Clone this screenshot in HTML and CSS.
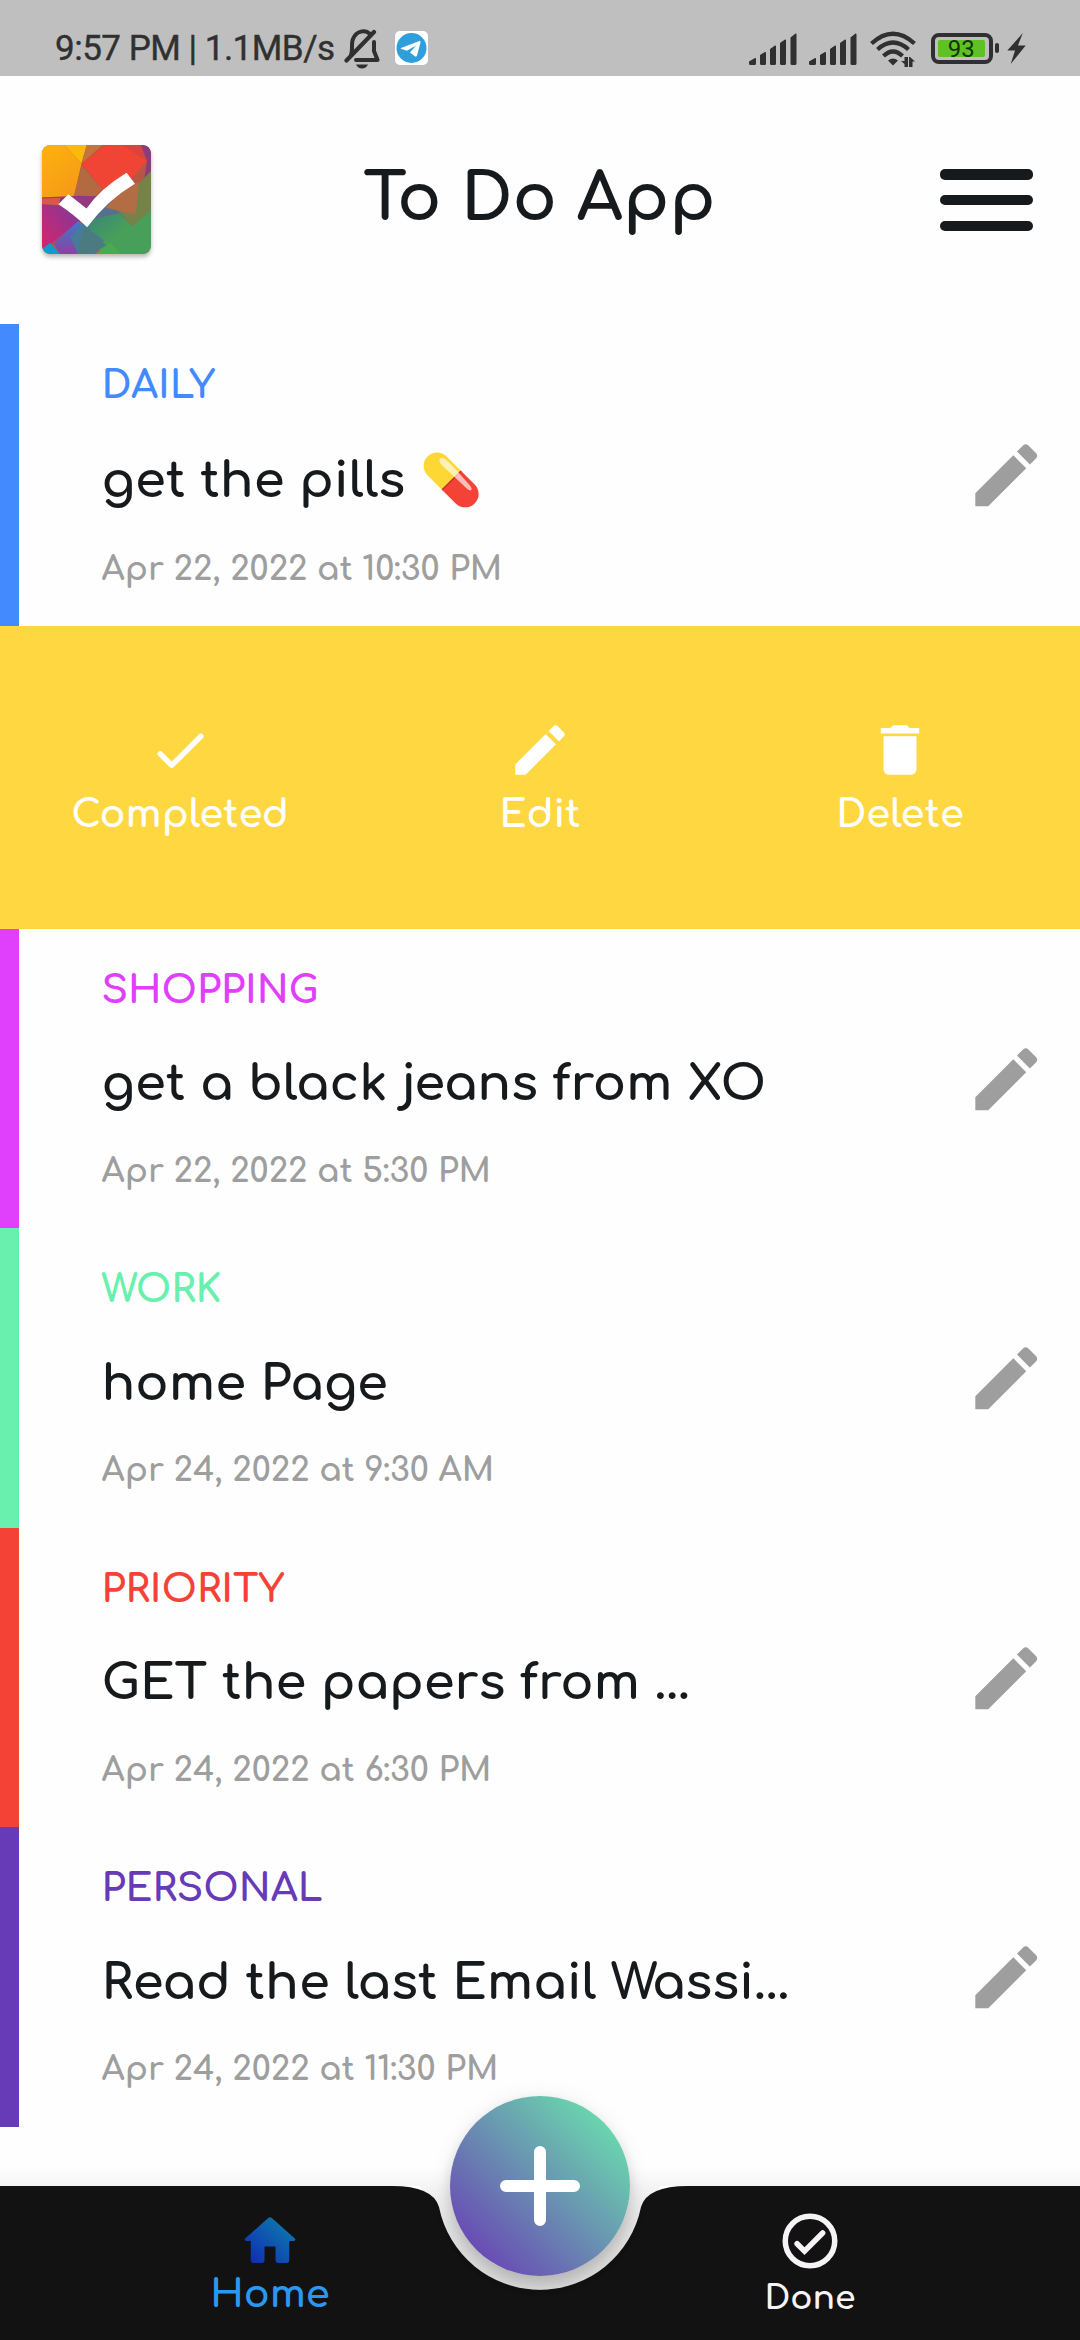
FILE: index.html
```html
<!DOCTYPE html>
<html lang="en">
<head>
<meta charset="utf-8">
<title>To Do App</title>
<link rel="stylesheet" href="styles.css">
</head>
<body>
<svg class="defs" width="0" height="0" aria-hidden="true">
  <symbol id="pencil" viewBox="0 0 24 24"><path d="M3 17.25V21h3.75L17.81 9.94l-3.75-3.75L3 17.25zM20.71 7.04c.39-.39.39-1.02 0-1.41l-2.34-2.34c-.39-.39-1.02-.39-1.41 0l-1.83 1.83 3.75 3.75 1.83-1.83z"/></symbol>
  <symbol id="signal" viewBox="0 0 48 32"><path d="M0 28.500l6-3.500q1-.5 1 1v4.500q0 1.500-1.500 1.500h-4q-1.500 0-1.500-1.500zM11 22l5-3q1-.5 1 1v10.500q0 1.500-1.500 1.500h-3q-1.500 0-1.500-1.500zM21 16l5-3.500q1-.5 1 1v17q0 1.500-1.500 1.500h-3q-1.500 0-1.500-1.500zM31 10l5-3.500q1-.5 1 1v23q0 1.500-1.500 1.500h-3q-1.500 0-1.500-1.500zM41.500 4.500l5-4q1-.5 1 1v29q0 1.500-1.500 1.500h-3q-1.500 0-1.500-1.500z"/></symbol>
</svg>
<div class="app">
  <header class="status">
    <div class="status-left">
      <span class="clock">9:57 PM | 1.1MB/s</span>
      <svg class="bell" viewBox="0 0 36 40">
        <path d="M7 26C9 21 7 14 9 10C12 2 21 0 26 5M30 13V22L33.500 31H12" fill="none" stroke="#303030" stroke-width="4" stroke-linecap="round" stroke-linejoin="round"/>
        <path d="M2.500 31.500L30 3" stroke="#303030" stroke-width="4.200" stroke-linecap="round"/>
        <path d="M12 35.500h12q-2 4-6 4t-6-4z" fill="#303030"/>
      </svg>
      <svg class="telegram" viewBox="0 0 33 34">
        <rect width="33" height="34" rx="5" fill="#fff"/>
        <circle cx="16.500" cy="17" r="15" fill="#2f9fdc"/>
        <path d="M6 17L24.500 10Q26 9.700 25.500 11.500L22 24.500Q21.300 26.500 19.500 25L15 21.500L21 14.500L12 19.700L6.500 18Q5 17.400 6 17z" fill="#fff"/>
      </svg>
    </div>
    <div class="status-right">
      <svg class="signal"><use href="#signal"/></svg>
      <svg class="signal"><use href="#signal"/></svg>
      <svg class="wifi" viewBox="0 0 46 37">
        <g fill="none" stroke="#303030" stroke-width="4.300">
          <path d="M1.500 12.500Q23 -7 44.500 12.500"/><path d="M7.500 18.500Q23 4.500 38.500 18.500"/><path d="M13.500 25Q23 16 32.500 25"/>
        </g>
        <path d="M18 29.500q5-4 10 0l-5 5zM34.500 26h3.500v10h-3.500v-3l-3.500-3h3.500zM40 26l5 4.500h-2.500v5.500h-3.500v-10z" fill="#303030"/>
      </svg>
      <div class="battery"><span class="level">93</span></div>
      <svg class="bolt" viewBox="0 0 19 32"><path d="M16 0L0 18H8L3.500 32L19 13H11z" fill="#303030"/></svg>
    </div>
  </header>

  <div class="topbar">
    <svg class="logo" viewBox="0 0 326 326">
      <defs>
        <clipPath id="tile"><rect width="326" height="326" rx="24"/></clipPath>
        <linearGradient id="amber" x1="0" y1="0" x2=".6" y2="1"><stop stop-color="#fcb40c"/><stop offset="1" stop-color="#f79a18"/></linearGradient>
        <linearGradient id="pink" x1="0" y1="1" x2="1" y2="0"><stop stop-color="#d8246c"/><stop offset="1" stop-color="#7a3a9c"/></linearGradient>
        <linearGradient id="green" x1="0" y1="0" x2="1" y2=".7"><stop stop-color="#387e80"/><stop offset=".6" stop-color="#479f5a"/></linearGradient>
        <linearGradient id="blue" x1="0" y1="0" x2="0" y2="1"><stop stop-color="#3e78d0"/><stop offset="1" stop-color="#8c419c"/></linearGradient>
      </defs>
      <g clip-path="url(#tile)">
        <rect width="326" height="326" fill="#b65644"/>
        <path d="M0 0H66L118 55L96 156L0 157z" fill="url(#amber)"/>
        <path d="M66 0H134L118 55z" fill="#fbb908"/>
        <path d="M134 0H182L118 55z" fill="#c0763c"/>
        <path d="M118 55L190 0H250L314 48L242 130L182 134z" fill="#f04534"/>
        <path d="M240 0H296L314 48z" fill="#d6453f"/>
        <path d="M296 0H326V90L306 100L314 48z" fill="#8c3c78"/>
        <path d="M118 60L180 132L130 185L94 156z" fill="#b36a40"/>
        <path d="M0 157L110 152L182 154L140 200L60 200L0 178z" fill="#94397f"/>
        <path d="M0 160L55 158L50 180L0 177z" fill="#d95848"/>
        <path d="M0 178L90 195L120 222L0 318z" fill="url(#pink)"/>
        <path d="M140 200L182 160L290 205L230 230L180 250L120 240z" fill="#54708c"/>
        <path d="M326 78V200L270 243L230 200L218 190z" fill="#758248"/>
        <path d="M190 188L225 150L290 110L280 208z" fill="#b36d45"/>
        <path d="M326 196V326H180L120 232L200 210L232 205L270 243z" fill="url(#green)"/>
        <path d="M35 293L108 228L140 245L110 326H52z" fill="url(#blue)"/>
        <path d="M85 275L118 235L185 285L160 326H108z" fill="#477b9b"/>
        <path d="M128 240L192 300L145 326H105z" fill="#4b7b81"/>
        <path d="M0 312L24 292L54 326H0z" fill="#0d9dc8"/>
        <path d="M160 326L206 292L238 326z" fill="#4aa951"/>
      </g>
      <path d="M49 177L79 147L133 190Q175 130 253 83L278 116Q195 165 135 246Q95 207 49 177z" fill="#fff"/>
    </svg>
    <h1 class="brand">To Do App</h1>
    <div class="menu"><i></i><i></i><i></i></div>
  </div>

  <main class="list">
    <article class="task daily tall">
      <div class="body"><div class="cat">DAILY</div><div class="name">get the pills <span class="emoji">💊</span></div><div class="date">Apr 22, 2022 at 10:30 PM</div></div>
      <svg class="pen"><use href="#pencil"/></svg>
    </article>
    <section class="actions">
      <div class="action"><svg viewBox="0 0 24 24"><path d="M9 16.200l-3.500-3.500a.984.984 0 0 0-1.400 0 .984.984 0 0 0 0 1.400l4.190 4.190c.39.39 1.020.39 1.410 0L20.300 7.700a.984.984 0 0 0 0-1.400.984.984 0 0 0-1.400 0L9 16.200z"/></svg><span>Completed</span></div>
      <div class="action"><svg><use href="#pencil"/></svg><span>Edit</span></div>
      <div class="action"><svg viewBox="0 0 24 24"><path d="M6 19c0 1.100.9 2 2 2h8c1.100 0 2-.9 2-2V7H6v12zM19 4h-3.500l-1-1h-5l-1 1H5v2h14V4z"/></svg><span>Delete</span></div>
    </section>
    <article class="task shopping">
      <div class="body"><div class="cat">SHOPPING</div><div class="name">get a black jeans from XO</div><div class="date">Apr 22, 2022 at 5:30 PM</div></div>
      <svg class="pen"><use href="#pencil"/></svg>
    </article>
    <article class="task work">
      <div class="body"><div class="cat">WORK</div><div class="name">home Page</div><div class="date">Apr 24, 2022 at 9:30 AM</div></div>
      <svg class="pen"><use href="#pencil"/></svg>
    </article>
    <article class="task priority">
      <div class="body"><div class="cat">PRIORITY</div><div class="name">GET the papers from ...</div><div class="date">Apr 24, 2022 at 6:30 PM</div></div>
      <svg class="pen"><use href="#pencil"/></svg>
    </article>
    <article class="task personal">
      <div class="body"><div class="cat">PERSONAL</div><div class="name">Read the last Email Wassi...</div><div class="date">Apr 24, 2022 at 11:30 PM</div></div>
      <svg class="pen"><use href="#pencil"/></svg>
    </article>
  </main>

  <nav class="nav">
    <svg class="nav-bg" viewBox="0 0 1080 184">
      <defs>
        <linearGradient id="shade" x1="0" y1="0" x2="0" y2="1"><stop stop-color="#000" stop-opacity="0"/><stop offset=".22" stop-color="#000" stop-opacity=".05"/><stop offset=".5" stop-color="#000" stop-opacity=".11"/><stop offset="1" stop-color="#000" stop-opacity=".14"/></linearGradient>
      </defs>
      <path d="M0 10H1080V30H660L640 80L600 133H480L440 80L420 30H0z" fill="url(#shade)"/>
      <path d="M0 30H392Q433 30 439 51A103 103 0 0 0 641 51Q647 30 688 30H1080V184H0z" fill="#121212"/>
    </svg>
    <div class="tab home">
      <svg viewBox="0 0 24 24">
        <defs><linearGradient id="roof" x1="0" y1="1" x2="1" y2="0"><stop offset=".1" stop-color="#1030b4"/><stop offset=".9" stop-color="#0d7cab"/></linearGradient></defs>
        <path fill="url(#roof)" d="M10 19v-5h4v5c0 .55.45 1 1 1h3c.55 0 1-.45 1-1v-7h1.700c.46 0 .68-.57.33-.87L12.670 3.600c-.38-.34-.96-.34-1.340 0l-8.360 7.530c-.34.3-.13.87.33.87H5v7c0 .55.45 1 1 1h3c.55 0 1-.45 1-1z"/>
      </svg>
      <span>Home</span>
    </div>
    <div class="tab done">
      <svg viewBox="0 0 24 24" fill="none" stroke="#f5f3f5" stroke-width="2"><circle cx="12" cy="12" r="9"/><path d="M7.300 13L10 15.700L16.600 9.100" stroke-linecap="round"/></svg>
      <span>Done</span>
    </div>
    <div class="fab"><svg viewBox="0 0 80 80"><path d="M6 40H74M40 6V74" stroke="#fff" stroke-width="12" stroke-linecap="round"/></svg></div>
  </nav>
</div>
</body>
</html>
```
FILE: styles.css
```css
* { box-sizing: border-box; }
body { margin: 0; background: #fefefe; font-family: "Comfortaa", "Quicksand", Lato, sans-serif; color: #171a1c; }
svg { display: block; flex: none; }
.defs { position: absolute; }
.app { width: 1080px; height: 2340px; display: flex; flex-direction: column; overflow: hidden; }

.status { height: 76px; background: #bfbfbf; color: #303030; display: flex; justify-content: space-between; padding: 29px 54px 0 55px; font-family: Roboto, sans-serif; }
.status-left, .status-right { display: flex; }
.clock { width: 289px; font-size: 35px; font-weight: 400; line-height: 40px; letter-spacing: -.5px; white-space: nowrap; -webkit-text-stroke: .4px #303030; }
.bell { width: 36px; height: 40px; }
.telegram { width: 33px; height: 34px; margin: 2px 0 0 15px; }
.signal { width: 48px; height: 32px; margin: 4px 12px 0 0; fill: #303030; }
.wifi { width: 46px; height: 37px; margin: 2px 15px 0 1px; }
.battery { position: relative; width: 62px; height: 31px; margin: 3.500px 14px 0 0; border: 4px solid #303030; border-radius: 8px; padding: 3.500px 4.500px 3.500px 3px; }
.battery::after { content: ""; position: absolute; right: -10px; top: 6.500px; width: 4px; height: 10px; border-radius: 2px; background: #303030; }
.level { display: block; height: 16.500px; background: #5fc224; border-radius: 2px; color: #14320a; font-size: 24px; line-height: 18px; text-align: center; }
.bolt { width: 19px; height: 31px; margin-top: 4px; }

.topbar { height: 248px; padding: 0 47px 0 42px; display: flex; align-items: center; justify-content: space-between; }
.logo { width: 109px; height: 109px; margin-bottom: 1px; border-radius: 8px; filter: drop-shadow(0 3px 2px rgba(0,0,0,.28)); }
.brand { margin: 0 12px 3px 0; font-size: 66px; font-weight: 700; line-height: 74px; }
.menu { width: 93px; height: 62px; display: flex; flex-direction: column; justify-content: space-between; }
.menu i { height: 10.500px; border-radius: 5px; background: #171a1c; }

.list { display: flex; flex-direction: column; }
.task { height: 299.600px; border-left: 19.500px solid; display: flex; justify-content: space-between; padding: 40px 33px 0 82.500px; }
.tall { height: 302px; }
.pen { width: 82.500px; height: 82.500px; margin-top: 69px; fill: #9e9e9e; }
.tall .pen { margin-top: 70px; }
.cat { font-size: 38.500px; font-weight: 700; line-height: 43px; }
.name { margin-top: 44.500px; font-size: 49.500px; font-weight: 700; line-height: 56px; color: #171a1c; white-space: nowrap; }
.emoji { font-size: 50px; line-height: 1; }
.date { margin-top: 40.500px; font-size: 33px; font-weight: 700; line-height: 37px; color: #9e9e9e; white-space: nowrap; }
.tall .name { height: 56px; margin-top: 45.500px; }
.tall .date { margin-top: 42px; }
.daily { color: #448aff; }
.shopping { color: #e040fb; }
.work { color: #69f0ae; }
.priority { color: #f44336; }
.personal { color: #673ab7; }

.actions { height: 302.600px; background: #ffd740; display: grid; grid-template-columns: repeat(3, 1fr); }
.action { display: flex; flex-direction: column; align-items: center; gap: 10px; padding-top: 91px; color: #fff; font-size: 38.500px; font-weight: 700; line-height: 43px; }
.action svg { width: 66px; height: 66px; fill: #fff; }

.nav { position: relative; height: 154px; margin-top: auto; display: grid; grid-template-columns: 1fr 1fr; }
.nav-bg { position: absolute; left: 0; top: -30px; width: 1080px; height: 184px; }
.tab { position: relative; display: flex; flex-direction: column; align-items: center; padding-top: 22px; font-weight: 700; }
.tab svg { width: 66px; height: 66px; }
.home { color: #2a98f0; font-size: 38.500px; line-height: 43px; }
.done { color: #f5f3f5; font-size: 33px; line-height: 37px; gap: 6px; }
.home svg { margin-bottom: -1px; }
.fab { position: absolute; left: 450px; top: -90px; width: 180px; height: 180px; border-radius: 50%; display: grid; place-items: center; background: linear-gradient(45deg, #694bb4 14%, #6ad6ae 86%); box-shadow: 0 8px 14px rgba(0,0,0,.14), 0 2px 22px rgba(0,0,0,.08); }
.fab svg { width: 80px; height: 80px; }
```
